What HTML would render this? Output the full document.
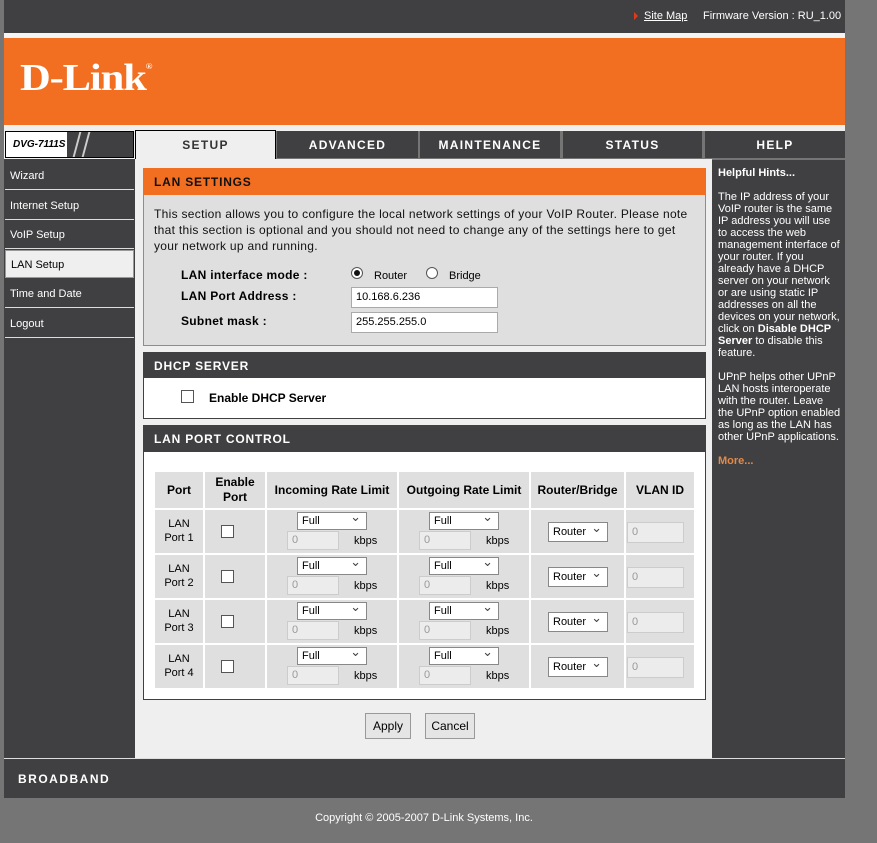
<!DOCTYPE html>
<html><head><meta charset="utf-8"><style>
*{margin:0;padding:0;box-sizing:border-box}
body{width:877px;height:843px;background:#757575;font-family:"Liberation Sans","DejaVu Sans",sans-serif;font-size:12px;position:relative;overflow:hidden}
.a{position:absolute}
.dark{background:#404042}
.tab{position:absolute;top:131px;height:27px;background:#404042;color:#fff;font-weight:bold;font-size:12px;letter-spacing:1.3px;text-align:center;line-height:28px}
.nav{position:absolute;left:5px;width:129px;height:28px;color:#fff;font-size:11px;line-height:28px;padding-left:5px;background:#404042;border-bottom:1px solid #ddd}
.hdr{position:absolute;left:143px;width:563px;height:27px;color:#fff;font-weight:bold;font-size:12px;letter-spacing:.8px;line-height:28px;padding-left:11px}
.cell{position:absolute;background:#dfdfdf;text-align:center;font-size:11px}
.sel{position:absolute;height:18px;border:1px solid #888;background:#fff;font-size:11px;line-height:16px;padding-left:4px}
.sel:after{content:"⌄";position:absolute;right:5px;top:-4px;font-size:13px;color:#444}
.inp{position:absolute;height:19px;border:1px solid #ccc;background:#ececec;color:#999;font-size:11px;line-height:17px;padding-left:4px}
.cb{position:absolute;width:13px;height:13px;border:1px solid #555;background:#fff}
.btn{position:absolute;top:713px;height:26px;border:1px solid #999;background:#e5e5e5;font-size:12px;line-height:24px;text-align:center}
</style></head><body>
<div class="a dark" style="left:4px;top:0;width:841px;height:33px"></div>
<div class="a" style="left:4px;top:33px;width:841px;height:5px;background:#f4f4f4"></div>
<div class="a" style="left:634px;top:12px;width:0;height:0;border-left:4px solid #e03a1a;border-top:4px solid transparent;border-bottom:4px solid transparent"></div>
<div class="a" style="left:644px;top:10px;color:#fff;font-size:11px;text-decoration:underline">Site Map</div>
<div class="a" style="left:703px;top:10px;color:#fff;font-size:11px">Firmware Version : RU_1.00</div>
<div class="a" style="left:4px;top:38px;width:841px;height:87px;background:#f26f22"></div>
<div class="a" style="left:20px;top:56px;color:#fff;font-family:'Liberation Serif',serif;font-weight:bold;font-size:38px;letter-spacing:-1px;transform:scaleX(1.12);transform-origin:left">D-Link<sup style="font-size:8px;vertical-align:top;position:relative;top:6px">®</sup></div>
<div class="a" style="left:4px;top:125px;width:841px;height:6px;background:#efefef"></div>
<div class="a" style="left:4px;top:130px;width:131px;height:29px;background:#efefef"></div>
<div class="a" style="left:5px;top:131px;width:129px;height:27px;border:1px solid #000;background:#fff"></div>
<div class="a" style="left:13px;top:139px;font-size:10px;font-weight:bold;font-style:italic">DVG-7111S</div>
<div class="a" style="left:67px;top:132px;width:66px;height:25px;background:#404042"></div>
<div class="a" style="left:76px;top:132px;width:2px;height:25px;background:#ccc;transform:skewX(-15deg)"></div>
<div class="a" style="left:85px;top:132px;width:2px;height:25px;background:#ccc;transform:skewX(-15deg)"></div>
<div class="tab" style="left:135px;top:130px;width:141px;height:29px;background:#efefef;color:#333;border:1px solid #000;border-bottom:none">SETUP</div>
<div class="tab" style="left:277px;width:141px">ADVANCED</div>
<div class="tab" style="left:420px;width:140px">MAINTENANCE</div>
<div class="tab" style="left:563px;width:139px">STATUS</div>
<div class="tab" style="left:705px;width:140px">HELP</div>
<div class="a dark" style="left:4px;top:159px;width:131px;height:600px;background:#404042"></div>
<div class="nav" style="top:162px">Wizard</div>
<div class="nav" style="top:192px">Internet Setup</div>
<div class="nav" style="top:221px">VoIP Setup</div>
<div class="nav" style="top:250px;background:#efefef;color:#000;border:1px solid #999">LAN Setup</div>
<div class="nav" style="top:280px">Time and Date</div>
<div class="nav" style="top:310px">Logout</div>
<div class="a" style="left:135px;top:159px;width:577px;height:600px;background:#efefef"></div>
<div class="a dark" style="left:712px;top:160px;width:133px;height:599px"></div>
<div class="a" style="left:718px;top:167px;width:122px;color:#fff;font-size:11px;line-height:12px">
<b>Helpful Hints...</b><br><br>The IP address of your VoIP router is the same IP address you will use to access the web management interface of your router. If you already have a DHCP server on your network or are using static IP addresses on all the devices on your network, click on <b>Disable DHCP Server</b> to disable this feature.<br><br><span style="white-space:nowrap">UPnP helps other UPnP<br>LAN hosts interoperate<br>with the router. Leave<br>the UPnP option enabled<br>as long as the LAN has<br>other UPnP applications.</span><br><br><b style="color:#e28a4a">More...</b></div>
<!-- LAN settings -->
<div class="hdr" style="top:168px;background:#f26f22;color:#111">LAN SETTINGS</div>
<div class="a" style="left:143px;top:195px;width:563px;height:151px;background:#dfdfdf;border:1px solid #f26f22;border-top:none"></div>
<div class="a" style="left:154px;top:206px;width:535px;font-size:12px;line-height:16px;letter-spacing:.3px;color:#111">This section allows you to configure the local network settings of your VoIP Router. Please note that this section is optional and you should not need to change any of the settings here to get your network up and running.</div>
<div class="a" style="left:181px;top:268px;font-weight:bold;font-size:12px;letter-spacing:.3px">LAN interface mode :</div>
<div class="a" style="left:181px;top:289px;font-weight:bold;font-size:12px;letter-spacing:.3px">LAN Port Address :</div>
<div class="a" style="left:181px;top:314px;font-weight:bold;font-size:12px;letter-spacing:.3px">Subnet mask :</div>
<div class="a" style="left:351px;top:267px;width:12px;height:12px;border:1px solid #555;border-radius:50%;background:#fff"><div style="width:6px;height:6px;margin:2px;border-radius:50%;background:#111"></div></div>
<div class="a" style="left:374px;top:270px;font-size:11px">Router</div>
<div class="a" style="left:426px;top:267px;width:12px;height:12px;border:1px solid #555;border-radius:50%;background:#fff"></div>
<div class="a" style="left:449px;top:270px;font-size:11px">Bridge</div>
<div class="a" style="left:351px;top:287px;width:147px;height:21px;border:1px solid #aaa;background:#fff;font-size:11px;line-height:19px;padding-left:4px">10.168.6.236</div>
<div class="a" style="left:351px;top:312px;width:147px;height:21px;border:1px solid #aaa;background:#fff;font-size:11px;line-height:19px;padding-left:4px">255.255.255.0</div>
<!-- DHCP -->
<div class="hdr dark" style="top:352px;height:26px">DHCP SERVER</div>
<div class="a" style="left:143px;top:378px;width:563px;height:41px;background:#fff;border:1px solid #404042;border-top:none"></div>
<div class="cb" style="left:181px;top:390px"></div>
<div class="a" style="left:209px;top:391px;font-weight:bold;font-size:12px">Enable DHCP Server</div>
<!-- LAN port -->
<div class="hdr dark" style="top:425px">LAN PORT CONTROL</div>
<div class="a" style="left:143px;top:452px;width:563px;height:248px;background:#fff;border:1px solid #404042;border-top:none"></div>
<div class="cell" style="left:155px;top:472px;width:48px;height:36px;font-weight:bold;font-size:12px;line-height:36px">Port</div>
<div class="cell" style="left:205px;top:472px;width:60px;height:36px;font-weight:bold;font-size:12px;line-height:15px;padding-top:3px">Enable<br>Port</div>
<div class="cell" style="left:267px;top:472px;width:130px;height:36px;font-weight:bold;font-size:12px;line-height:36px">Incoming Rate Limit</div>
<div class="cell" style="left:399px;top:472px;width:130px;height:36px;font-weight:bold;font-size:12px;line-height:36px">Outgoing Rate Limit</div>
<div class="cell" style="left:531px;top:472px;width:93px;height:36px;font-weight:bold;font-size:12px;line-height:36px">Router/Bridge</div>
<div class="cell" style="left:626px;top:472px;width:68px;height:36px;font-weight:bold;font-size:12px;line-height:36px">VLAN ID</div>
<script>
for(let i=0;i<4;i++){const y=510+i*45;document.write(`
<div class="cell" style="left:155px;top:${y}px;width:48px;height:43px;line-height:14px;padding-top:7px">LAN<br>Port ${i+1}</div>
<div class="cell" style="left:205px;top:${y}px;width:60px;height:43px"></div>
<div class="cb" style="left:221px;top:${y+15}px"></div>
<div class="cell" style="left:267px;top:${y}px;width:130px;height:43px"></div>
<div class="sel" style="left:297px;top:${y+2}px;width:70px">Full</div>
<div class="inp" style="left:287px;top:${y+21}px;width:52px">0</div>
<div class="a" style="left:354px;top:${y+25}px;font-size:11px">kbps</div>
<div class="cell" style="left:399px;top:${y}px;width:130px;height:43px"></div>
<div class="sel" style="left:429px;top:${y+2}px;width:70px">Full</div>
<div class="inp" style="left:419px;top:${y+21}px;width:52px">0</div>
<div class="a" style="left:486px;top:${y+25}px;font-size:11px">kbps</div>
<div class="cell" style="left:531px;top:${y}px;width:93px;height:43px"></div>
<div class="sel" style="left:548px;top:${y+12}px;width:60px;height:20px;line-height:18px">Router</div>
<div class="cell" style="left:626px;top:${y}px;width:68px;height:43px"></div>
<div class="inp" style="left:627px;top:${y+12}px;width:57px;height:21px;line-height:19px">0</div>`)}
</script>
<div class="btn" style="left:365px;width:46px">Apply</div>
<div class="btn" style="left:425px;width:50px">Cancel</div>
<div class="a" style="left:4px;top:758px;width:841px;height:1px;background:#ddd"></div>
<div class="a dark" style="left:4px;top:759px;width:841px;height:39px"></div>
<div class="a" style="left:18px;top:772px;color:#fff;font-weight:bold;font-size:12px;letter-spacing:1.5px">BROADBAND</div>
<div class="a" style="left:0;width:848px;top:812px;text-align:center;color:#fff;font-size:11px">Copyright © 2005-2007 D-Link Systems, Inc.</div>
</body></html>
